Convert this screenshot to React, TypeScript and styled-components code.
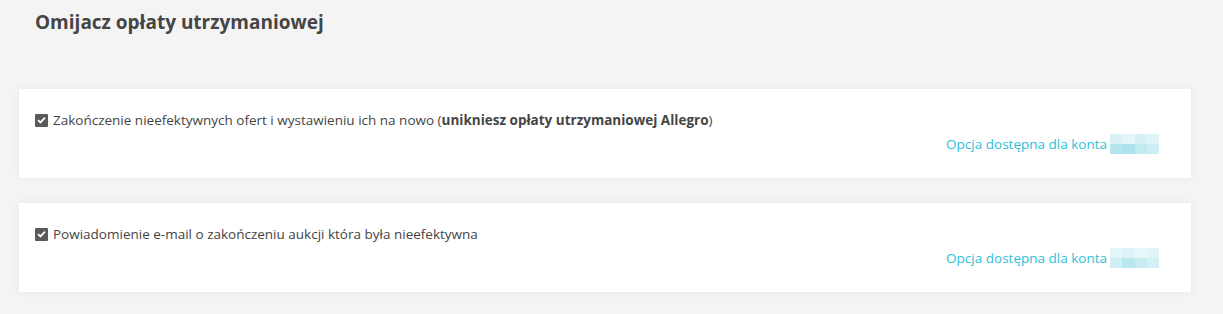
import styled, { createGlobalStyle } from 'styled-components';

const GlobalStyle = createGlobalStyle`
	html, body {
		margin: 0;
		padding: 0;
		background: #f4f4f4;
	}
	body {
		font-family: 'Open Sans', 'Noto Sans', sans-serif;
		color: #454545;
	}
`;

const Page = styled.div`
	width: 1223px;
	min-height: 314px;
	padding: 9px 32px 0 19px;
	box-sizing: border-box;
`;

const Title = styled.h2`
	margin: 0 0 54px 16px;
	font-size: 19px;
	font-weight: 700;
	line-height: 26px;
	color: #454545;
`;

const Card = styled.div`
	background: #fff;
	box-shadow: 0 0 8px rgba(0, 0, 0, 0.06);
	height: 89px;
	box-sizing: border-box;
	padding: 21px 32px 0 16px;
	margin-bottom: 25px;
	display: flex;
	flex-direction: column;
`;

const OptionRow = styled.label`
	display: flex;
	align-items: center;
	gap: 5px;
	font-size: 13.5px;
	line-height: 20px;
	color: #454545;
	b {
		font-weight: 700;
	}
`;

const Check = styled.span`
	width: 13px;
	height: 13px;
	background: #5a5a5a;
	border-radius: 1px;
	display: inline-flex;
	align-items: center;
	justify-content: center;
	flex-shrink: 0;
`;

const Availability = styled.div`
	align-self: flex-end;
	display: flex;
	align-items: center;
	gap: 3px;
	margin-top: 4px;
	font-size: 13.5px;
	color: #2dc1d9;
`;

const Pixelated = styled.span`
	width: 49px;
	height: 20px;
	display: grid;
	grid-template-columns: repeat(4, 1fr);
	grid-template-rows: repeat(2, 1fr);
`;

const Pixel = styled.span<{ $c: string }>`
	background: ${(p) => p.$c};
`;

const pixelSets = [
	['#d9f2f6', '#e4f6f9', '#d6f1f5', '#dff4f8', '#b5e6ee', '#ade3ec', '#c2ebf1', '#cdeef3'],
	['#e3f5f8', '#dcf3f7', '#e6f7fa', '#e0f5f8', '#d0eff4', '#b9e7ef', '#c6ecf2', '#d4f0f5'],
];

function CheckMark() {
	return (
		<svg width='9' height='8' viewBox='0 0 9 8'>
			<path d='M1 4.2 L3.4 6.4 L8 1.6' fill='none' stroke='#fff' strokeWidth='1.8' />
		</svg>
	);
}

export default function App() {
	const options = [
		{
			text: (
				<>
					Zakończenie nieefektywnych ofert i wystawieniu ich na nowo (
					<b>unikniesz opłaty utrzymaniowej Allegro</b>)
				</>
			),
		},
		{ text: <>Powiadomienie e-mail o zakończeniu aukcji która była nieefektywna</> },
	];

	return (
		<Page>
			<GlobalStyle />
			<Title>Omijacz opłaty utrzymaniowej</Title>
			{options.map((option, i) => (
				<Card key={i}>
					<OptionRow>
						<Check>
							<CheckMark />
						</Check>
						<span>{option.text}</span>
					</OptionRow>
					<Availability>
						Opcja dostępna dla konta
						<Pixelated>
							{pixelSets[i].map((c, j) => (
								<Pixel key={j} $c={c} />
							))}
						</Pixelated>
					</Availability>
				</Card>
			))}
		</Page>
	);
}
